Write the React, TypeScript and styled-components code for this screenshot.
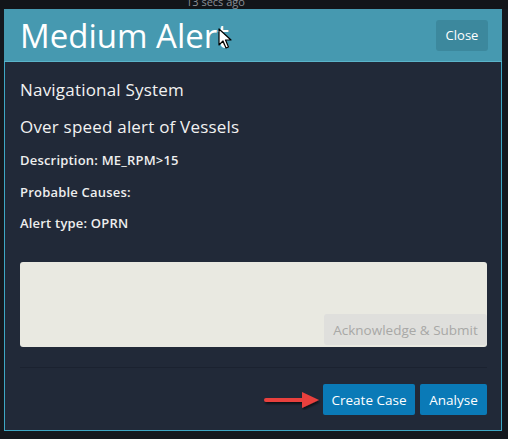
import React from "react";
import styled, { createGlobalStyle } from "styled-components";

const Global = createGlobalStyle`
  html, body { margin: 0; padding: 0; background: #14181e; }
  body { width: 508px; height: 439px; overflow: hidden; font-family: "Open Sans", "Noto Sans", sans-serif; }
`;

const Page = styled.div`
  width: 508px;
  height: 439px;
  background: #14181e;
  display: flex;
  flex-direction: column;
  position: relative;
`;

const TopStrip = styled.div`
  height: 9px;
  background: #121519;
  position: relative;
  overflow: hidden;
`;

const Ago = styled.span`
  position: absolute;
  left: 186px;
  top: -6px;
  font-size: 11px;
  color: #8a8f96;
`;

const Modal = styled.div`
  margin-left: 4px;
  width: 498px;
  height: 422px;
  display: flex;
  flex-direction: column;
  position: relative;
`;

const Header = styled.div`
  height: 52px;
  background: #4699b0;
  border-bottom: 1px solid #5bb4ca;
  display: flex;
  align-items: center;
  justify-content: space-between;
  padding: 0 14px 0 16px;
`;

const Title = styled.h1`
  margin: 0;
  font-size: 33px;
  font-weight: 400;
  color: #ffffff;
`;

const CloseButton = styled.button`
  width: 52px;
  height: 31px;
  border: none;
  border-radius: 3px;
  background: #3c889d;
  color: #ffffff;
  font-family: inherit;
  font-size: 13px;
  padding: 0;
`;

const Body = styled.div`
  flex: 1;
  background: #212938;
  border: 1px solid #3ea7c4;
  border-top: none;
  display: flex;
  flex-direction: column;
  padding: 0 14px 0 15px;
`;

const Section = styled.h2<{ $top: number }>`
  margin: ${(p) => p.$top}px 0 0 0;
  font-size: 17px;
  font-weight: 400;
  letter-spacing: 0.2px;
  color: #f2f2f2;
  line-height: 20px;
`;

const Info = styled.p<{ $top: number }>`
  margin: ${(p) => p.$top}px 0 0 0;
  font-size: 13px;
  font-weight: 600;
  letter-spacing: 0.2px;
  color: #eeeeee;
  line-height: 16px;
`;

const TextBox = styled.div`
  margin-top: 31px;
  height: 85px;
  background: #e9e9e1;
  border-radius: 3px;
  display: flex;
  align-items: flex-end;
  justify-content: flex-end;
  padding: 0 0 2px 0;
  box-sizing: border-box;
`;

const AckButton = styled.button`
  width: 163px;
  height: 31px;
  border: none;
  border-radius: 3px;
  background: #dfdfdc;
  color: #a8a8a6;
  font-family: inherit;
  font-size: 13.5px;
  padding: 0;
`;

const Divider = styled.div`
  margin-top: 20px;
  height: 1px;
  background: #1b2230;
`;

const Footer = styled.div`
  display: flex;
  justify-content: flex-end;
  align-items: center;
  gap: 5px;
  margin-top: 16px;
  position: relative;
`;

const PrimaryButton = styled.button<{ $w: number }>`
  width: ${(p) => p.$w}px;
  height: 31px;
  border: none;
  border-radius: 2px;
  background: #0a7ab7;
  color: #ffffff;
  font-family: inherit;
  font-size: 13.5px;
  font-weight: 500;
  padding: 0;
`;

const Arrow = styled.svg`
  position: absolute;
  left: 243px;
  top: 6px;
`;

const Cursor = styled.svg`
  position: absolute;
  left: 214px;
  top: 19px;
`;

export default function App() {
  return (
    <Page>
      <Global />
      <TopStrip>
        <Ago>13 secs ago</Ago>
      </TopStrip>
      <Modal>
        <Header>
          <Title>Medium Alert</Title>
          <CloseButton>Close</CloseButton>
        </Header>
        <Body>
          <Section $top={18}>Navigational System</Section>
          <Section $top={17}>Over speed alert of Vessels</Section>
          <Info $top={15}>Description: ME_RPM&gt;15</Info>
          <Info $top={16}>Probable Causes:</Info>
          <Info $top={15}>Alert type: OPRN</Info>
          <TextBox>
            <AckButton>Acknowledge &amp; Submit</AckButton>
          </TextBox>
          <Divider />
          <Footer>
            <Arrow width="60" height="20" viewBox="0 0 60 20">
              <defs>
                <filter id="sh" x="-20%" y="-50%" width="140%" height="200%">
                  <feDropShadow dx="1" dy="2" stdDeviation="1.2" floodColor="#000" floodOpacity="0.6" />
                </filter>
              </defs>
              <g filter="url(#sh)">
                <line x1="3" y1="10" x2="42" y2="10" stroke="#e9403e" strokeWidth="4" strokeLinecap="round" />
                <polygon points="39,2 56,10 39,18" fill="#e9403e" />
              </g>
            </Arrow>
            <PrimaryButton $w={92}>Create Case</PrimaryButton>
            <PrimaryButton $w={67}>Analyse</PrimaryButton>
          </Footer>
        </Body>
        <Cursor width="14" height="22" viewBox="0 0 14 22">
          <path d="M1 1 L1 17 L5 13 L8 20 L10.5 19 L7.5 12 L13 12 Z" fill="#fff" stroke="#000" strokeWidth="1.2" strokeLinejoin="round" />
        </Cursor>
      </Modal>
    </Page>
  );
}
